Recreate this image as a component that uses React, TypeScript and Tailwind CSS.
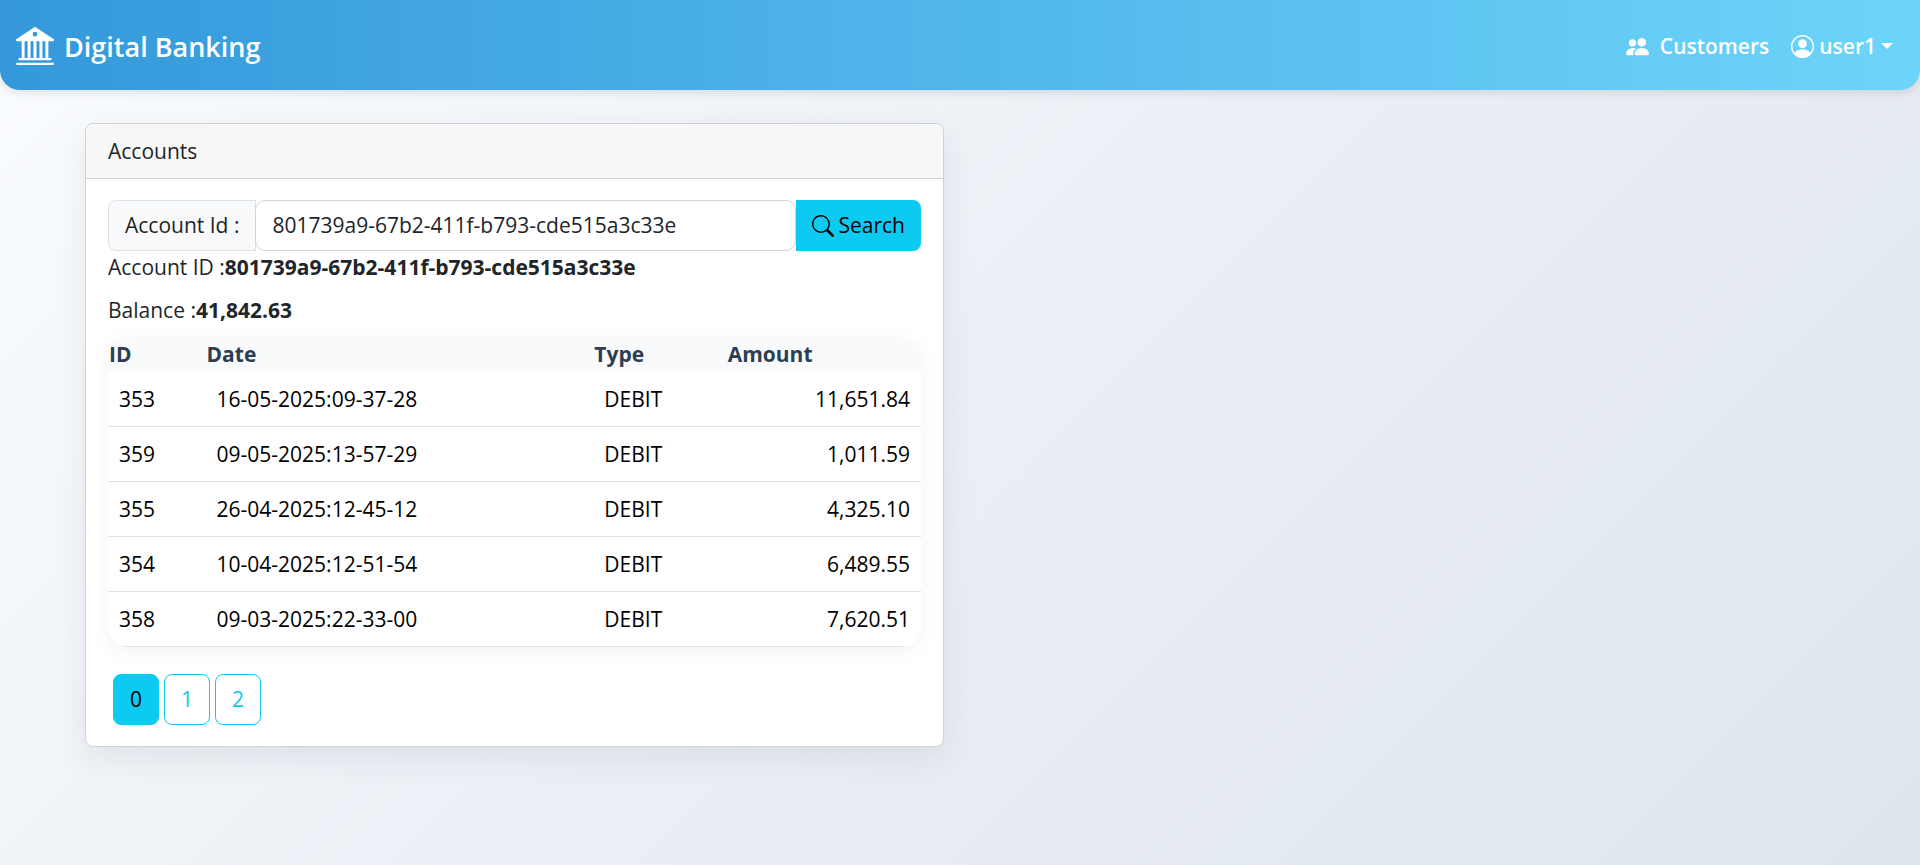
import { BsBank2, BsPeopleFill, BsPersonCircle, BsSearch } from "react-icons/bs";

const operations = [
  { id: 353, date: "16-05-2025:09-37-28", type: "DEBIT", amount: "11,651.84" },
  { id: 359, date: "09-05-2025:13-57-29", type: "DEBIT", amount: "1,011.59" },
  { id: 355, date: "26-04-2025:12-45-12", type: "DEBIT", amount: "4,325.10" },
  { id: 354, date: "10-04-2025:12-51-54", type: "DEBIT", amount: "6,489.55" },
  { id: 358, date: "09-03-2025:22-33-00", type: "DEBIT", amount: "7,620.51" },
];

const accountId = "801739a9-67b2-411f-b793-cde515a3c33e";

function Navbar() {
  return (
    <nav className="flex h-[90px] items-center justify-between rounded-b-[20px] bg-[linear-gradient(90deg,#3498db,#6dd5fa)] pl-4 pr-[27px] pt-[2px] font-semibold text-white shadow-[0_3px_8px_rgba(0,0,0,0.1)]">
      <a href="#" className="flex items-center gap-[10px] text-[27px]">
        <BsBank2 className="size-[38px]" />
        Digital Banking
      </a>
      <div className="flex items-center gap-[22px]">
        <a href="#customers" className="flex items-center gap-[11px]">
          <BsPeopleFill className="size-[23px]" />
          Customers
        </a>
        <button type="button" className="flex items-center gap-[5px]">
          <BsPersonCircle className="size-[23px]" />
          user1
          <span className="border-x-[6px] border-t-[6px] border-x-transparent border-t-white" />
        </button>
      </div>
    </nav>
  );
}

function SearchForm() {
  return (
    <form className="flex h-[51px]" onSubmit={(e) => e.preventDefault()}>
      <label
        htmlFor="account-id"
        className="flex items-center rounded-l-lg border border-[#dee2e6] bg-[#f8f9fa] px-4"
      >
        Account Id :
      </label>
      <input
        id="account-id"
        type="text"
        defaultValue={accountId}
        className="-ml-px min-w-0 flex-1 rounded-[10px] border border-[#ced4da] bg-white px-4 outline-none"
      />
      <button type="submit" className="flex items-center gap-[5px] rounded-r-lg bg-[#0dcaf0] px-4 text-black">
        <BsSearch className="size-[22px]" />
        Search
      </button>
    </form>
  );
}

function OperationsTable() {
  return (
    <div className="overflow-hidden rounded-[20px] shadow-[0_4px_20px_rgba(0,0,0,0.05)]">
      <table className="w-full table-fixed border-separate border-spacing-0 text-left">
        <thead className="bg-[#f8fafc] text-[#2c3e50]">
          <tr>
            <th className="w-[12%] p-px">ID</th>
            <th className="w-[47.7%] p-px">Date</th>
            <th className="w-[16.4%] p-px">Type</th>
            <th className="p-px">Amount</th>
          </tr>
        </thead>
        <tbody className="text-black">
          {operations.map((op) => (
            <tr key={op.id} className="h-[55px]">
              <td className="border-b border-[#dee2e6] px-[11px]">{op.id}</td>
              <td className="border-b border-[#dee2e6] px-[11px]">{op.date}</td>
              <td className="border-b border-[#dee2e6] px-[11px]">{op.type}</td>
              <td className="border-b border-[#dee2e6] px-[11px] text-right">{op.amount}</td>
            </tr>
          ))}
        </tbody>
      </table>
    </div>
  );
}

function Pagination() {
  return (
    <div className="flex gap-[5px] pl-[5px] pt-[27px]">
      {[0, 1, 2].map((page) => (
        <button
          key={page}
          type="button"
          className={
            page === 0
              ? "h-[51px] w-[46px] rounded-lg border border-[#0dcaf0] bg-[#0dcaf0] text-black"
              : "h-[51px] w-[46px] rounded-lg border border-[#0dcaf0] text-[#0dcaf0]"
          }
        >
          {page}
        </button>
      ))}
    </div>
  );
}

export default function App() {
  return (
    <div className="min-h-screen bg-[linear-gradient(135deg,#fafcfe,#ebeff5_50%,#dee6ed)] font-['Open_Sans',sans-serif] text-[21px] leading-[33px] text-[#212529]">
      <Navbar />
      <main className="grid grid-cols-2 gap-8 px-[85px] py-[33px]">
        <section className="rounded-lg border border-[#cfd1d3] bg-white shadow-[0_11px_32px_rgba(44,62,80,0.09)]">
          <h1 className="rounded-t-lg border-b border-[#cfd1d3] bg-[#f7f7f7] px-[22px] pb-[10px] pt-[11px]">
            Accounts
          </h1>
          <div className="px-[22px] py-[21px]">
            <SearchForm />
            <div className="mb-[10px] space-y-[10px]">
              <p>
                Account ID :<b>{accountId}</b>
              </p>
              <p>
                Balance :<b>41,842.63</b>
              </p>
            </div>
            <OperationsTable />
            <Pagination />
          </div>
        </section>
      </main>
    </div>
  );
}
